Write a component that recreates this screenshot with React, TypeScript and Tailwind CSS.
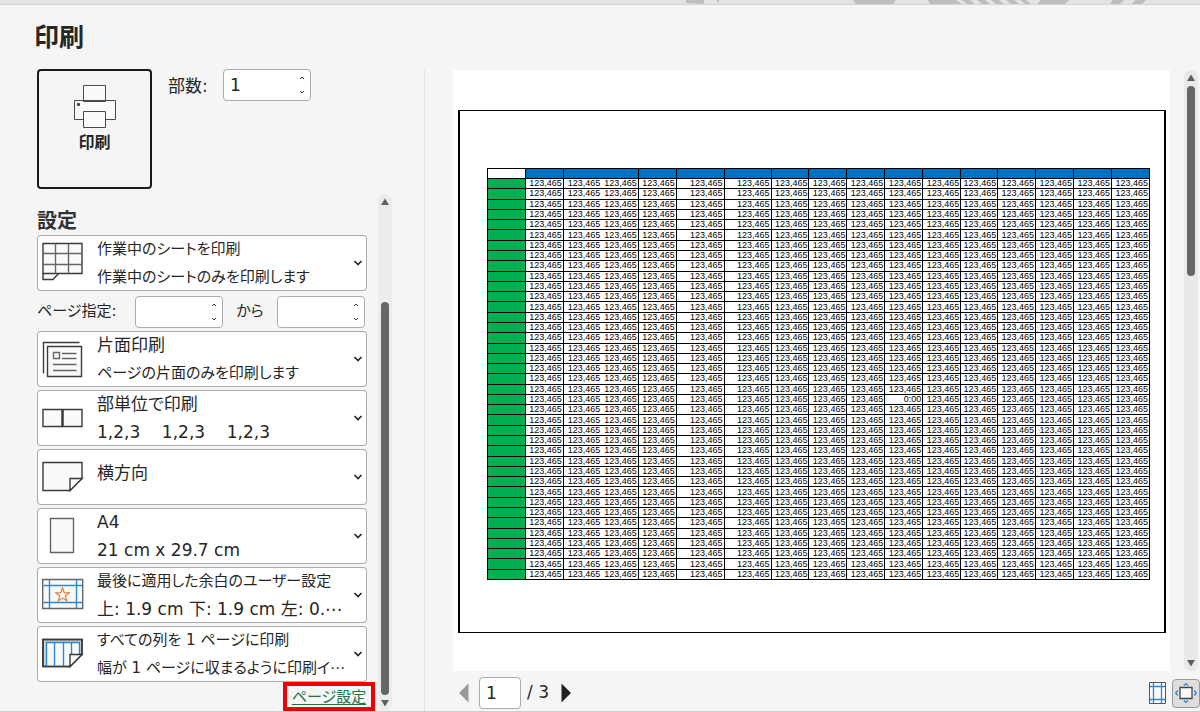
import type { ReactNode } from 'react';

// widths of the 16 data columns of the sheet
const columns = [38, 38, 37, 38, 48, 47, 38, 38, 38, 38, 38, 37, 38, 38, 38, 38];
const rows = Array.from({ length: 39 }, (_, r) => columns.map((_, c) => (r === 21 && c === 9 ? '0:00' : '123,465')));

const Spinner = ({ id, value }: { id: string; value?: string }) => (
  <div className="flex h-8 w-[88px] shrink-0 overflow-hidden rounded border border-[#ababab] bg-white">
    <input
      id={id}
      type="text"
      inputMode="numeric"
      defaultValue={value}
      className="w-full min-w-0 flex-1 bg-transparent pt-0.5 pl-1.5 focus:outline-none"
    />
    <div className="flex w-4 flex-col justify-between py-1">
      <button type="button" aria-label="増やす" className="flex h-2 items-center justify-center">
        <svg width="6" height="4" viewBox="0 0 6 4" fill="none" stroke="#333">
          <path d="M1 3l2-2 2 2" />
        </svg>
      </button>
      <button type="button" aria-label="減らす" className="flex h-2 items-center justify-center">
        <svg width="6" height="4" viewBox="0 0 6 4" fill="none" stroke="#333">
          <path d="M1 1l2 2 2-2" />
        </svg>
      </button>
    </div>
  </div>
);

type SettingProps = {
  label: string;
  title: string;
  detail?: string;
  icon: ReactNode;
  titleClass?: string;
  detailClass?: string;
};

const Setting = ({ label, title, detail, icon, titleClass = 'text-[17px]', detailClass = 'text-[17px]' }: SettingProps) => (
  <div className="flex h-14 w-[330px] items-center rounded bg-white pr-1 pl-[5px] ring-1 ring-[#ababab] ring-inset">
    <svg width="42" height="42" viewBox="0 0 42 42" fill="#fafafa" stroke="#3b3b3b" strokeWidth="1.4" className="shrink-0">
      {icon}
    </svg>
    <div className="ml-[13px] h-14 min-w-0 flex-1">
      <select
        aria-label={label}
        className={`block w-full appearance-none bg-transparent leading-7 focus:outline-none ${titleClass} ${detail ? 'h-7' : 'h-12'}`}
      >
        <option>{title}</option>
      </select>
      {detail && <p className={`h-7 leading-7 whitespace-pre ${detailClass}`}>{detail}</p>}
    </div>
    <svg width="10" height="8" viewBox="0 0 10 8" fill="none" stroke="#222" strokeWidth="1.6" className="shrink-0">
      <path d="M1.5 2L5 5.5 8.5 2" />
    </svg>
  </div>
);

const ScrollArrow = ({ down }: { down?: boolean }) => (
  <svg width="10" height="8" viewBox="0 0 10 8" fill="#5f5f5f" className="shrink-0">
    <path d={down ? 'M1 1h8L5 7.5z' : 'M1 7h8L5 .5z'} />
  </svg>
);

const SheetIcon = (
  <>
    <path d="M1 31v6.5h10l6-6.500" />
    <path d="M1 1.5h39v30H1z" />
    <path d="M13.5 1.5v30M26.500 1.5v30M1 11.500h39M1 22.500h39" stroke="#666" />
  </>
);

const OneSidedIcon = (
  <>
    <path d="M37.5 4.5h-36v31" fill="none" />
    <path d="M5.5 8.5h34v30h-34z" />
    <path d="M11.5 14.5h6v6h-6zM20 15.500h14.500M20 20.500h14.500M11 26.500h23.500M11 32.500h23.500" stroke="#666" />
  </>
);

const CollateIcon = (
  <>
    <path d="M1 12.5h39v17H1z" />
    <path d="M20.5 12v18" strokeWidth="2.5" />
  </>
);

const LandscapeIcon = (
  <>
    <path d="M1 6.5h39v16l-12 12H1z" />
    <path d="M28 34.5v-12h12z" />
  </>
);

const PaperIcon = <path d="M8.5 3.5h23v34h-23z" stroke="#666" />;

const MarginIcon = (
  <>
    <path d="M.7 5.5h40v29H.7z" stroke="#666" />
    <path d="M7.5 6v28M34.5 6v28M1.500 11.5h38.500M1.500 28.5h38.500" stroke="#2b88d8" />
    <path
      d="M20.5 14l1.800 4.700 4.900.2-3.900 3.100 1.400 4.900-4.200-2.800-4.200 2.800 1.400-4.900-3.900-3.100 4.900-.2z"
      stroke="#e07b39"
      strokeWidth="1.2"
    />
  </>
);

const FitColumnsIcon = (
  <>
    <path d="M1 6.5h39v15l-12 12H1z" fill="#d5d5d5" />
    <path d="M4.5 9.5h33v12l-9 11h-24z" fill="#fafafa" stroke="none" />
    <path d="M4.5 33V9.5h33v12M12.5 10v23M21.5 10v23M29.5 10v12" fill="none" stroke="#2b88d8" />
    <path d="M1 6.5h39v15l-12 12H1z" fill="none" strokeWidth="1.6" />
    <path d="M28 33.5v-12h12z" />
  </>
);

const PrintSettings = () => (
  <section className="flex w-[425px] shrink-0 flex-col border-r border-[#e6e6e6] pl-[37px]">
    <div className="flex">
      <button
        type="button"
        className="flex h-[120px] w-[115px] flex-col items-center rounded border-2 border-[#1a1a1a] pt-3.5 font-bold"
      >
        <svg width="42" height="44" viewBox="0 0 42 44" fill="#fafafa" stroke="#4a4a4a">
          <path d="M9.5.5h22v16h-22zM.5 15.5h41v19H.5z" />
          <path d="M9.5 26.5h22v16h-22z" />
          <path d="M3.5 18.5h2v2h-2z" fill="#333" />
        </svg>
        <span className="text-base leading-7">印刷</span>
      </button>
      <label htmlFor="copies" className="ml-4 w-[55px] pt-px leading-8">
        部数:
      </label>
      <Spinner id="copies" value="1" />
    </div>
    <div className="mt-[5px] flex flex-1">
      <div className="w-[341px] shrink-0">
        <h2 className="pt-3.5 text-xl leading-[27px] font-bold text-[#333]">設定</h2>
        <Setting
          label="印刷対象"
          title="作業中のシートを印刷"
          detail="作業中のシートのみを印刷します"
          icon={SheetIcon}
          titleClass="text-[15px]"
          detailClass="text-[15px]"
        />
        <div className="flex h-10 items-center pt-px text-[15px]">
          <label htmlFor="from" className="w-[98px] shrink-0">
            ページ指定:
          </label>
          <Spinner id="from" />
          <label htmlFor="to" className="w-[54px] text-center">
            から
          </label>
          <Spinner id="to" />
        </div>
        <div className="flex flex-col gap-[3px]">
          <Setting
            label="印刷面"
            title="片面印刷"
            detail="ページの片面のみを印刷します"
            icon={OneSidedIcon}
            detailClass="text-[15px]"
          />
          <Setting label="印刷単位" title="部単位で印刷" detail="1,2,3    1,2,3    1,2,3" icon={CollateIcon} />
          <Setting label="印刷の向き" title="横方向" icon={LandscapeIcon} />
          <Setting label="用紙サイズ" title="A4" detail="21 cm x 29.7 cm" icon={PaperIcon} />
          <Setting
            label="余白"
            title="最後に適用した余白のユーザー設定"
            detail="上: 1.9 cm 下: 1.9 cm 左: 0.⋯"
            icon={MarginIcon}
            titleClass="text-[15px]"
          />
          <Setting
            label="拡大縮小"
            title="すべての列を 1 ページに印刷"
            detail="幅が 1 ページに収まるように印刷イ⋯"
            icon={FitColumnsIcon}
            titleClass="text-[15px]"
            detailClass="text-[15px]"
          />
        </div>
        <div className="flex w-[338px] justify-end">
          <div className="flex h-[29px] w-[92px] items-center justify-center border-4 border-[#f00000]">
            <a href="#page-setup" className="text-[15px] leading-5 whitespace-nowrap text-[#217346] underline underline-offset-2">
              ページ設定
            </a>
          </div>
        </div>
      </div>
      <div className="flex w-3.5 flex-col items-center rounded-full bg-[#ececec] py-1">
        <ScrollArrow />
        <div className="mt-24 w-2 flex-1 rounded-full bg-[#666]" />
        <div className="mt-1 flex">
          <ScrollArrow down />
        </div>
      </div>
    </div>
  </section>
);

// columns 1 and 2 have no line between them
const sideBorder = (c: number) => (c === 1 ? 'border-l' : c === 2 ? 'border-r' : 'border-x');

const SheetTable = () => (
  <table className="h-[412px] w-full table-fixed border-collapse font-['Liberation_Sans',Arial,sans-serif] text-[9px] leading-[9px] text-black">
    <colgroup>
      <col style={{ width: `${(38 / 663) * 100}%` }} />
      {columns.map((w, i) => (
        <col key={i} style={{ width: `${(w / 663) * 100}%` }} />
      ))}
    </colgroup>
    <thead>
      <tr className="h-2.5">
        <td className="border border-black p-0" />
        {columns.map((_, c) => (
          <td key={c} className={`border-y border-black bg-[#0070c0] p-0 ${sideBorder(c)}`} />
        ))}
      </tr>
    </thead>
    <tbody>
      {rows.map((row, r) => (
        <tr key={r} className="h-2.5">
          <td className="border border-black bg-[#00b050] p-0" />
          {row.map((value, c) => (
            <td key={c} className={`border-y border-black p-0 pr-px text-right ${sideBorder(c)}`}>
              {value}
            </td>
          ))}
        </tr>
      ))}
    </tbody>
  </table>
);

const Preview = () => (
  <section className="flex min-w-0 flex-1 flex-col pl-7">
    <div className="mt-px flex">
      <div className="min-w-0 flex-1 bg-white pt-10 pr-1 pb-[38px] pl-[5px]">
        <div className="border border-x-2 border-black pt-[57px] pr-3.5 pb-[52px] pl-[27px]">
          <SheetTable />
        </div>
      </div>
      <div className="mr-0.5 ml-3.5 flex w-3.5 flex-col items-center rounded-full bg-[#e9e9e9] py-1">
        <ScrollArrow />
        <div className="mt-1 h-[190px] w-2 rounded-full bg-[#666]" />
        <div className="mt-auto flex">
          <ScrollArrow down />
        </div>
      </div>
    </div>
    <div className="flex h-10 flex-1 items-center pt-1 pl-[5px]">
      <button type="button" aria-label="前のページ">
        <svg width="11" height="20" viewBox="0 0 11 20" fill="#999">
          <path d="M10.5.5v19L1 10z" />
        </svg>
      </button>
      <input
        aria-label="現在のページ"
        defaultValue="1"
        className="ml-2.5 h-8 w-[42px] rounded border border-[#ababab] bg-white pl-1.5 focus:outline-none"
      />
      <span className="ml-1.5">/ 3</span>
      <button type="button" aria-label="次のページ" className="ml-3">
        <svg width="11" height="20" viewBox="0 0 11 20" fill="#222">
          <path d="M.5.5v19L10 10z" />
        </svg>
      </button>
      <button type="button" aria-label="余白の表示" className="ml-auto">
        <svg width="17" height="22" viewBox="0 0 17 22" fill="#fafafa" stroke="#555">
          <path d="M.5.5h16v21H.5z" />
          <path d="M4.5 1v20M12.5 1v20M1 4.5h15M1 17.5h15" stroke="#2b88d8" strokeWidth="1.3" />
        </svg>
      </button>
      <button
        type="button"
        aria-label="ページに合わせる"
        className="ml-1.5 flex h-[29px] w-7 items-center justify-center rounded border border-[#999] bg-[#dedede]"
      >
        <svg width="22" height="20" viewBox="0 0 22 20" fill="none" stroke="#2b88d8" strokeWidth="1.3">
          <path d="M5 4.5h12v11H5z" fill="#fafafa" stroke="#444" />
          <path d="M8.800 2.500L11 .7l2.200 1.800M8.800 17.500l2.200 1.800 2.200-1.800M2.800 7.500L.7 10l2.100 2.500M19.200 7.500l2.100 2.500-2.100 2.500" />
        </svg>
      </button>
    </div>
  </section>
);

const App = () => (
  <main
    lang="ja"
    className="flex min-h-screen flex-col border-b border-[#cfcfcf] bg-[#f5f5f5] font-['DejaVu_Sans','Noto_Sans_CJK_JP',sans-serif] text-[17px] text-[#262626] [font-feature-settings:'palt']"
  >
    <div className="flex h-[5px] justify-end border-b border-[#d6d6d6] bg-[#e3e3e3]">
      <svg width="540" height="4" viewBox="0 0 540 4" fill="#bdbdbd">
        <path d="M26 0h18v4l-18-1zM57 0h2v2h-2zM193 0h43l-3 4h-37zM268 0h28l6 4h-32zM302 0h8l5 4h-8zM317 0h8l5 4h-8zM331 0h8l5 4h-8zM346 0h8l5 4h-8zM360 0h6l5 4h-6zM381 0h28l-4 4h-28zM453 0h11l-4 4h-10zM475 0h11l-4 4h-10z" />
      </svg>
    </div>
    <h1 className="h-16 pl-[34px] text-[25px] leading-[66px] font-bold">印刷</h1>
    <div className="flex flex-1">
      <PrintSettings />
      <Preview />
    </div>
  </main>
);

export default App;
